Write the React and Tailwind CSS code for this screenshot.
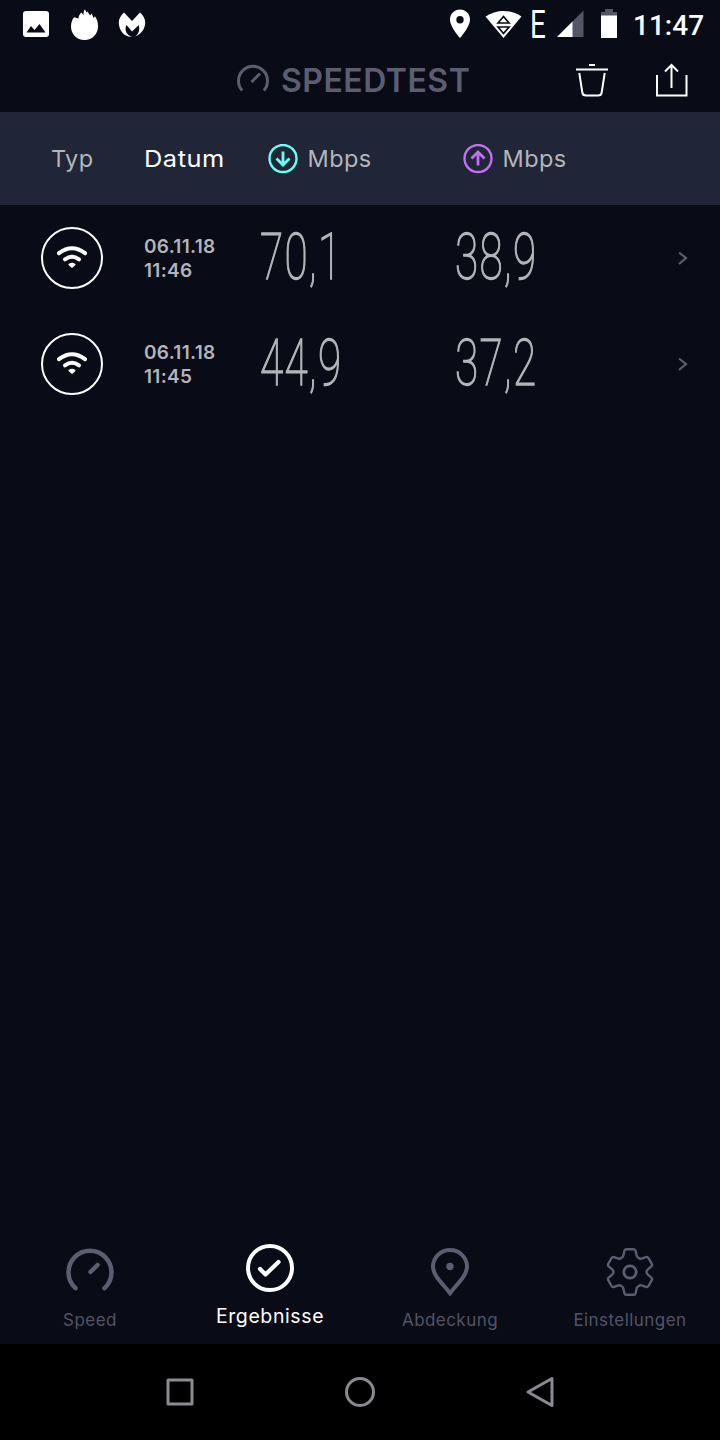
import React from 'react';

const results = [
    { date: '06.11.18', time: '11:46', down: '70,1', up: '38,9' },
    { date: '06.11.18', time: '11:45', down: '44,9', up: '37,2' },
];

const StatusBar = () => (
    <div className="flex h-12 items-center pl-[22px] text-white">
        <svg width="28" height="32" viewBox="0 0 28 32" fill="currentColor">
            <path fillRule="evenodd" d="M4 3h20a3 3 0 0 1 3 3v20a3 3 0 0 1-3 3H4a3 3 0 0 1-3-3V6a3 3 0 0 1 3-3zM4.500 24.500h19L17.500 16l-5 6-3.500-4z" />
        </svg>
        <svg className="ml-5" width="30" height="32" viewBox="0 0 30 32" fill="currentColor">
            <path d="M15 1.200c-1.200 1.500-1.700 3.500-1.500 6L11.500 4.500C9.500 6 8.500 8 8.500 10.500L4 9.200C2 11.500 1 15 1 18.500 1 26 6.500 32 14.500 32S28 26 28 18.500c0-4-1-7.500-3-10.200L23.500 10l-1.800-4.500L20 7.500 17.500 3.500l-1 1z" />
        </svg>
        <svg className="ml-[18px]" width="28" height="32" viewBox="0 0 28 32" fill="currentColor">
            <path d="M6 4.500 14 13l8-8.500c3.300 3 5.200 6 5.200 10 0 6.500-4.200 11.800-10 14C20.500 26 22 22.500 20.800 17L14 23.500 8.500 17C6 22 8.500 27 14 28.800 6 29.500.8 22 .8 14.500c0-4 2-7 5.200-10z" />
        </svg>

        <svg className="ml-[303px]" width="22" height="32" viewBox="0 0 22 32" fill="currentColor">
            <path fillRule="evenodd" d="M11 1.500c-5.600 0-10 4.400-10 10C1 19 11 30 11 30s10-11 10-18.500c0-5.600-4.400-10-10-10zm0 6.500a3.700 3.700 0 1 1 0 7.400A3.700 3.700 0 0 1 11 8z" />
        </svg>
        <svg className="ml-[14px]" width="38" height="32" viewBox="0 0 38 32">
            <path d="M0.500 8.500C11.500 1 25.500 1 36.500 8.500L18.500 30z" fill="currentColor" />
            <path d="M13 15 18.500 8.500 24 15zM13 19 18.500 25.500 24 19z" fill="none" stroke="#090b17" strokeWidth="1.700" />
        </svg>
        <span className="ml-[7px] mt-0.5 w-[15px] origin-left scale-x-[0.73] font-['Roboto'] text-[38px] leading-none">E</span>
        <svg className="ml-3" width="27" height="32" viewBox="0 0 27 32">
            <path d="M26.500 2.500V29H0z" fill="#545666" />
            <path d="M15.500 13.500V29H0z" fill="currentColor" />
        </svg>
        <svg className="ml-[17px]" width="16" height="32" viewBox="0 0 16 32">
            <path d="M4 1h8v3h4v4H0V4h4z" fill="#545666" />
            <path d="M0 7.500h16V30H0z" fill="currentColor" />
        </svg>
        <span className="ml-[16px] mt-[3px] font-['Roboto'] text-[28px] font-medium leading-none">11:47</span>
    </div>
);

const Header = () => (
    <header className="flex h-16 items-center">
        <svg className="ml-[236px] shrink-0 text-[#5c5d70]" width="34" height="34" viewBox="0 0 34 34" fill="none" stroke="currentColor" strokeWidth="3">
            <path d="M6.200 27.500a14.500 14.500 0 1 1 21.600 0M15.500 19 24 10.500" />
        </svg>
        <h1 className="ml-[11px] mt-0.5 w-[190px] whitespace-nowrap font-['Inter'] text-[32px] font-semibold leading-none tracking-[0.5px] text-[#5c5d70]">SPEEDTEST</h1>
        <svg className="ml-[105px] shrink-0 text-white" width="32" height="34" viewBox="0 0 32 34" fill="none" stroke="currentColor" strokeWidth="2">
            <path d="M0 6.500h32M13 2h6M3.300 10l3 19.500q.5 3 3.500 3h12.400q3 0 3.500-3l3-19.500" />
        </svg>
        <svg className="ml-12 shrink-0 text-white" width="32" height="34" viewBox="0 0 32 34" fill="none" stroke="currentColor" strokeWidth="2">
            <path d="M1 12v20.500h29.500V12M15.500 25V2.500M9 8.500l6.500-6.500L22 8.500" />
        </svg>
    </header>
);

const SpeedColumn = ({ up }) => (
    <div className="flex w-[195px] items-center">
        <svg className={up ? 'text-[#bf71ee]' : 'text-[#6afff3]'} width="30" height="30" viewBox="0 0 30 30" fill="none" stroke="currentColor" strokeWidth="2.400">
            <circle cx="15" cy="14.500" r="13.500" />
            <path d={up ? 'M15 21.500V8M8.500 14.500 15 8l6.500 6.500' : 'M15 7.500V21M8.500 14.500l6.500 6.500 6.500-6.500'} strokeWidth="2.800" />
        </svg>
        <span className="ml-2.5 tracking-[0.4px]">Mbps</span>
    </div>
);

const TableHead = () => (
    <div className="flex h-[93px] items-center bg-[#202538] font-['Inter'] text-[23.500px] leading-none text-[#b4b5ba]">
        <span className="ml-[51px] w-[93px] tracking-[0.4px]">Typ</span>
        <span className="w-[123.500px] origin-left text-white">
            <span className="inline-block origin-left scale-x-[1.08] tracking-[0.500px]">Datum</span>
        </span>
        <SpeedColumn />
        <SpeedColumn up />
    </div>
);

const Value = ({ children }) => (
    <span className="-mt-px w-[195px] font-['Roboto'] text-[65px] font-thin leading-none tracking-[2px] text-[#b4b4b9]">
        <span className="inline-block origin-left scale-x-[0.65] [-webkit-text-stroke:1.400px_#b4b4b9]">{children}</span>
    </span>
);

const ResultRow = ({ result }) => (
    <li className="flex h-[106px] items-center">
        <div className="ml-[41px] flex size-[62px] shrink-0 items-center justify-center rounded-full border-2 border-white">
            <svg width="32" height="26" viewBox="0 0 32 26" fill="none" stroke="white" strokeLinecap="round">
                <path d="M3 8.200q13-10 26 0" strokeWidth="4" />
                <path d="M9 14.300q7-5 14 0" strokeWidth="4" />
                <path d="M13.500 19.500q2.500-1.400 5 0L16 21.800z" fill="white" strokeWidth="2" strokeLinejoin="round" />
            </svg>
        </div>
        <div className="ml-[41px] mt-0.5 w-[116px] shrink-0 font-['Inter'] text-[19px] font-semibold leading-6 tracking-[0.3px] text-[#b4b4b9]">
            <p>{result.date}</p>
            <p>{result.time}</p>
        </div>
        <Value>{result.down}</Value>
        <Value>{result.up}</Value>
        <svg className="ml-[27px]" width="12" height="16" viewBox="0 0 12 16" fill="none" stroke="#5c5d70" strokeWidth="2.200">
            <path d="M2 2.500 9 8l-7 6" />
        </svg>
    </li>
);

const tabs = [
    {
        name: 'Speed',
        icon: <path d="M9.500 40.200a21.500 21.500 0 1 1 29 0M24.500 24l7-7" strokeWidth="4.500" strokeLinecap="round" />,
    },
    {
        name: 'Ergebnisse',
        active: true,
        icon: (
            <>
                <circle cx="24" cy="24" r="22" strokeWidth="4" />
                <path d="m14 25 5.500 5.500L32.500 18" strokeWidth="4.200" strokeLinecap="round" strokeLinejoin="round" />
            </>
        ),
    },
    {
        name: 'Abdeckung',
        icon: (
            <>
                <path d="M24 45.200C18 37 7 28 7 18.500a17 16.500 0 0 1 34 0C41 28 30 37 24 45.200z" strokeWidth="4" />
                <circle cx="24" cy="18.500" r="3.700" fill="currentColor" stroke="none" />
            </>
        ),
    },
    {
        name: 'Einstellungen',
        icon: (
            <>
                <path d="M20.500 1.200h7q1.700 0 2.100 1.600l1.100 5q.3 1.300 1.600 2l1 .6q1 .6 2.300.200l4.200-1.500q1.700-.6 2.600.9l3.300 5.700q.9 1.500-.4 2.700l-3.700 3.300q-1 .9-1 2v.6q0 1.200 1 2.100l3.700 3.200q1.300 1.200.4 2.700l-3.300 5.700q-.9 1.500-2.600.9l-4.200-1.500q-1.300-.4-2.300.2l-1 .6q-1.300.7-1.600 2l-1.100 5q-.4 1.600-2.100 1.600h-7q-1.700 0-2.100-1.600l-1.100-5q-.3-1.300-1.600-2l-1-.6q-1-.6-2.300-.2l-4.200 1.500q-1.700.6-2.600-.9l-3.300-5.700q-.9-1.500.4-2.700l3.700-3.200q1-.9 1-2.100v-.6q0-1.100-1-2L2.700 18.400q-1.300-1.200-.4-2.700L5.600 10q.9-1.500 2.600-.9l4.200 1.500q1.300.4 2.300-.2l1-.6q1.300-.7 1.600-2l1.100-5q.4-1.600 2.100-1.600z" strokeWidth="2.400" />
                <circle cx="24" cy="24" r="6.200" strokeWidth="2.800" />
            </>
        ),
    },
];

const TabBar = () => (
    <nav className="grid h-[104px] grid-cols-4 font-['Inter']">
        {tabs.map((tab) => (
            <button
                key={tab.name}
                className={tab.active ? 'flex flex-col items-center pt-1 text-[19.500px] tracking-[0.600px] text-white' : 'flex flex-col items-center pt-2 text-[17px] tracking-[0.450px] text-[#525466]'}
            >
                <svg className={tab.active ? '' : 'text-[#5c5d70]'} width="48" height="48" viewBox="0 0 48 48" fill="none" stroke="currentColor">
                    {tab.icon}
                </svg>
                <span className="mt-3 leading-6">{tab.name}</span>
            </button>
        ))}
    </nav>
);

const SystemNav = () => (
    <div className="flex h-24 items-center justify-center gap-[148px] bg-black">
        {['M4 4h24v24H4z', 'M16 2.500a13.500 13.500 0 1 1 0 27 13.500 13.500 0 0 1 0-27z', 'M28 2.500v27L4 16z'].map((d) => (
            <svg key={d} width="32" height="32" viewBox="0 0 32 32" fill="none" stroke="#8c8a91" strokeWidth="3" strokeLinejoin="round">
                <path d={d} />
            </svg>
        ))}
    </div>
);

const App = () => (
    <div className="flex h-[1440px] w-[720px] flex-col overflow-hidden bg-[#090b17]">
        <StatusBar />
        <Header />
        <TableHead />
        <ul className="flex-1">
            {results.map((result) => (
                <ResultRow key={result.time} result={result} />
            ))}
        </ul>
        <TabBar />
        <SystemNav />
    </div>
);

export default App;
